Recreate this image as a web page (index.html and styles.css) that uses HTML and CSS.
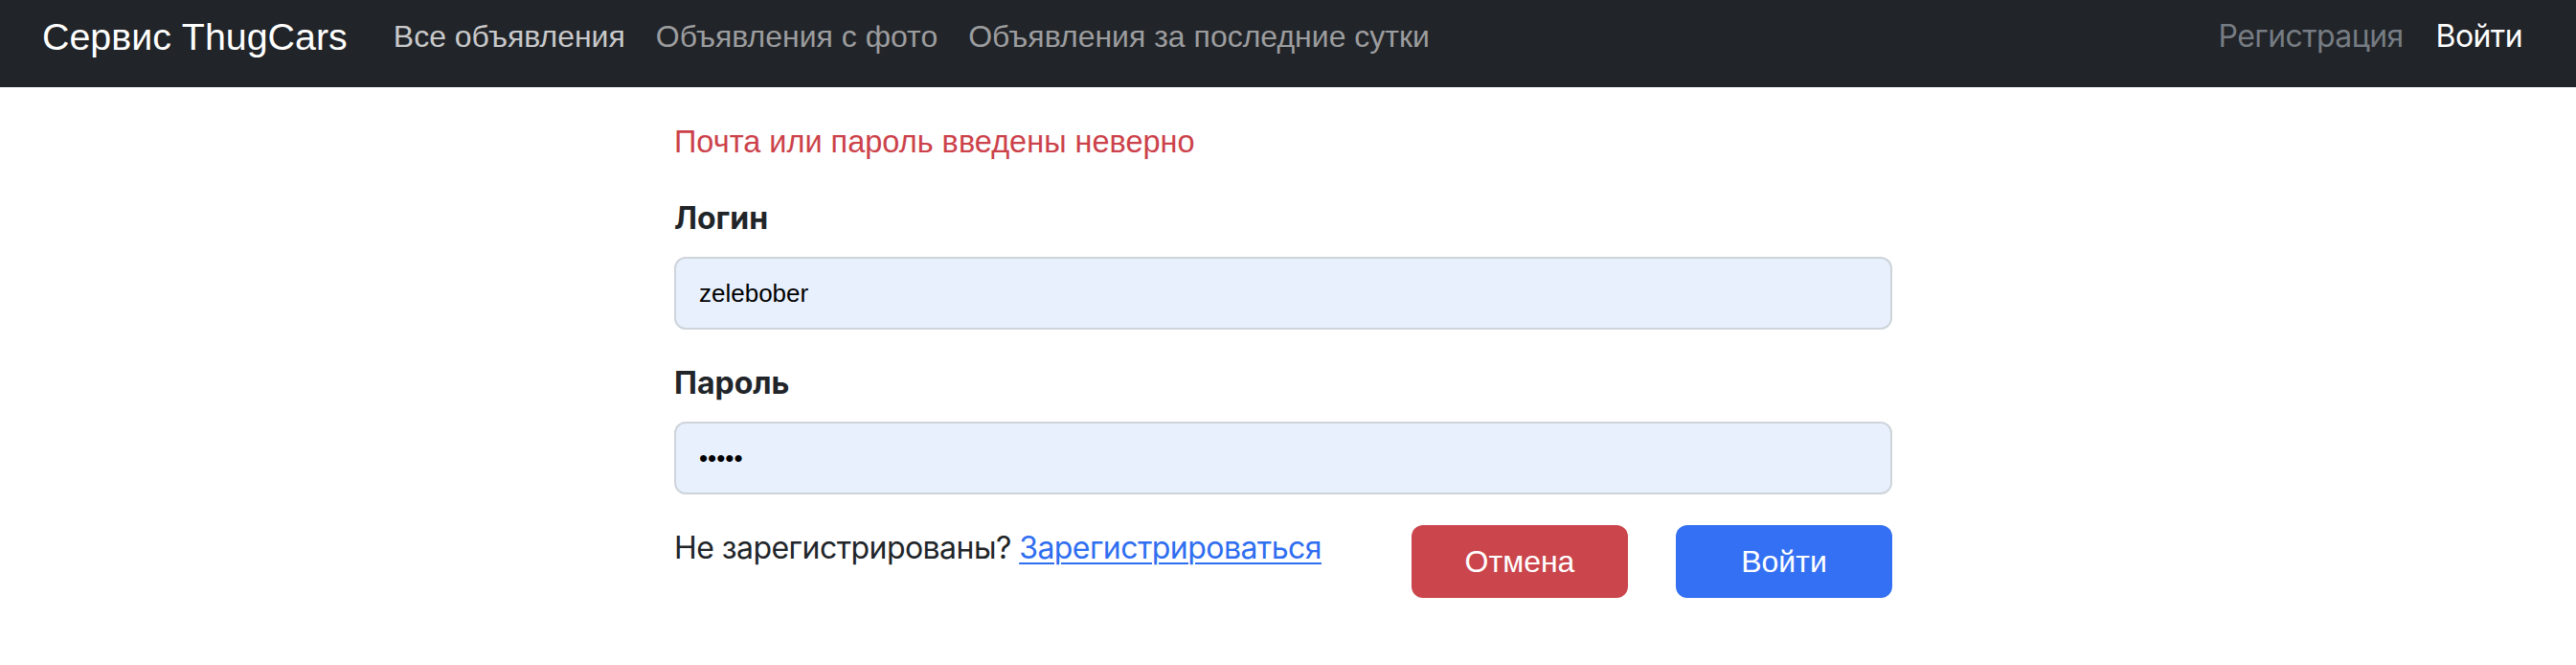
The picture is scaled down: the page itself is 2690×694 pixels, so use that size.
FILE: index.html
```html
<!DOCTYPE html>
<html lang="ru">
<head>
<meta charset="utf-8">
<title>Вход — Сервис ThugCars</title>
<link rel="stylesheet" href="styles.css">
</head>
<body>
<nav class="navbar">
  <a class="brand" href="#">Сервис ThugCars</a>
  <ul class="nav">
    <li><a class="nav-link nav-link-bright" href="#">Все объявления</a></li>
    <li><a class="nav-link" href="#">Объявления с фото</a></li>
    <li><a class="nav-link" href="#">Объявления за последние сутки</a></li>
  </ul>
  <ul class="nav nav-right">
    <li><a class="nav-link nav-link-muted" href="#">Регистрация</a></li>
    <li><a class="nav-link nav-link-current" href="#">Войти</a></li>
  </ul>
</nav>
<main class="page">
  <form class="login">
    <div class="error">Почта или пароль введены неверно</div>
    <div class="field">
      <label class="label" for="login">Логин</label>
      <input class="input" id="login" type="text" value="zelebober" readonly>
    </div>
    <div class="field">
      <label class="label" for="password">Пароль</label>
      <input class="input input-password" id="password" type="password" value="12345" readonly>
    </div>
    <div class="actions">
      <p class="signup">Не зарегистрированы? <a class="signup-link" href="#">Зарегистрироваться</a></p>
      <div class="buttons">
        <button class="btn btn-cancel" type="button">Отмена</button>
        <button class="btn btn-submit" type="button">Войти</button>
      </div>
    </div>
  </form>
</main>
</body>
</html>
```
FILE: styles.css
```css
html, body {
  margin: 0;
  padding: 0;
  background: #ffffff;
}

body {
  font-family: "Liberation Sans", Arial, sans-serif;
  color: #212529;
}

.navbar {
  display: flex;
  align-items: flex-start;
  box-sizing: border-box;
  height: 91px;
  padding: 8px 40px 0 44px;
  background: #212428;
}

.brand {
  font-size: 39.4px;
  line-height: 60px;
  color: #ffffff;
  text-decoration: none;
  margin-right: 32px;
  white-space: nowrap;
}

.nav {
  display: flex;
  list-style: none;
  margin: 0;
  padding: 0;
}

.nav-right {
  margin-left: auto;
}

.nav-link {
  display: block;
  padding: 0 16px;
  font-size: 32px;
  line-height: 60px;
  color: #9c9d9f;
  text-decoration: none;
  white-space: nowrap;
}

.nav-link-bright {
  color: #c8c9ca;
}

.nav-right .nav-link {
  font-family: Inter, "Liberation Sans", sans-serif;
  letter-spacing: -0.6px;
}

.nav-link-muted {
  color: #767c83;
}

.nav-link-current {
  color: #ffffff;
  padding-left: 18px;
}

.page {
  display: flex;
  justify-content: center;
  padding: 33px 10px 0 0;
}

.login {
  width: 1272px;
  margin: 0;
}

.error {
  font-size: 32.5px;
  line-height: 48px;
  color: #cc424a;
  margin-bottom: 32px;
}

.field {
  margin-bottom: 32px;
}

.label {
  display: block;
  font-family: Inter, "Liberation Sans", sans-serif;
  font-weight: 700;
  font-size: 32px;
  line-height: 48px;
  margin-bottom: 16px;
  color: #212529;
}

.input {
  display: block;
  box-sizing: border-box;
  width: 100%;
  height: 76px;
  margin: 0;
  padding: 0 24px;
  border: 2px solid #ced4da;
  border-radius: 12px;
  background: #e8f0fe;
  color: #000000;
  font-family: "Liberation Sans", Arial, sans-serif;
  font-size: 26px;
  outline: none;
}

.actions {
  display: flex;
  align-items: flex-start;
}

.signup {
  flex: 1;
  margin: 0;
  font-family: Inter, "Liberation Sans", sans-serif;
  font-size: 32px;
  line-height: 48px;
  letter-spacing: -0.55px;
  color: #212529;
}

.signup-link {
  color: #2f6ef0;
  text-decoration: underline;
  text-underline-offset: 4px;
  text-decoration-thickness: 2px;
}

.buttons {
  display: flex;
  gap: 50px;
}

.btn {
  width: 226px;
  height: 76px;
  border: 0;
  border-radius: 12px;
  color: #ffffff;
  font-family: "Liberation Sans", Arial, sans-serif;
  font-size: 32px;
  cursor: pointer;
}

.btn-cancel {
  background: #cb454c;
}

.btn-submit {
  background: #3470f3;
}
```
